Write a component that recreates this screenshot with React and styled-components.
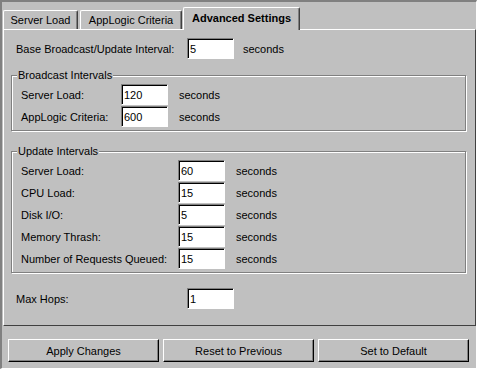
import { createGlobalStyle, styled } from "styled-components";

const GlobalStyle = createGlobalStyle`
  body {
    margin: 0;
    background: #c0c0c0;
    font-family: "Liberation Sans", Arial, sans-serif;
    font-size: 11px;
    color: #000;
  }
`;

const tabs = [
  { name: "Server Load", width: 75, gap: 2 },
  { name: "AppLogic Criteria", width: 102, gap: 1 },
  { name: "Advanced Settings", width: 117, gap: 0, active: true },
];

const broadcast = [
  { label: "Server Load:", value: "120" },
  { label: "AppLogic Criteria:", value: "600" },
];

const updates = [
  { label: "Server Load:", value: "60" },
  { label: "CPU Load:", value: "15" },
  { label: "Disk I/O:", value: "5" },
  { label: "Memory Thrash:", value: "15" },
  { label: "Number of Requests Queued:", value: "15" },
];

const App = () => {
  return (
    <>
      <GlobalStyle />
      <Frame>
        <TabRow>
          {tabs.map((t) => (
            <Tab key={t.name} $w={t.width} $gap={t.gap} $active={t.active}>
              {t.name}
            </Tab>
          ))}
        </TabRow>
        <Panel>
          <FieldRow $label={162}>
            <Label>Base Broadcast/Update Interval:</Label>
            <Field defaultValue="5" readOnly />
            <Label>seconds</Label>
          </FieldRow>

          <Group $top={16}>
            <GroupTitle>Broadcast Intervals</GroupTitle>
            {broadcast.map((r) => (
              <GroupRow key={r.label} $label={89}>
                <Label>{r.label}</Label>
                <Field defaultValue={r.value} readOnly />
                <Label>seconds</Label>
              </GroupRow>
            ))}
          </Group>

          <Group $top={20}>
            <GroupTitle>Update Intervals</GroupTitle>
            {updates.map((r) => (
              <GroupRow key={r.label} $label={146}>
                <Label>{r.label}</Label>
                <Field defaultValue={r.value} readOnly />
                <Label>seconds</Label>
              </GroupRow>
            ))}
          </Group>

          <FieldRow $label={162} $top={15}>
            <Label>Max Hops:</Label>
            <Field defaultValue="1" readOnly />
          </FieldRow>
        </Panel>
        <ButtonBar>
          <Button>Apply Changes</Button>
          <Button>Reset to Previous</Button>
          <Button>Set to Default</Button>
        </ButtonBar>
      </Frame>
    </>
  );
};

const Frame = styled.div`
  width: 477px;
  height: 369px;
  box-sizing: border-box;
  border-top: 2px solid #808080;
  border-left: 2px solid #808080;
  border-right: 1px solid #fff;
  border-bottom: 1px solid #fff;
  padding: 5px 0 0 1px;
  display: flex;
  flex-direction: column;
`;

const TabRow = styled.div`
  display: flex;
  align-items: flex-end;
  height: 22px;
  position: relative;
  z-index: 1;
`;

const Tab = styled.div`
  box-sizing: border-box;
  width: ${(p) => p.$w}px;
  height: ${(p) => (p.$active ? 23 : 19)}px;
  margin-right: ${(p) => p.$gap}px;
  margin-bottom: ${(p) => (p.$active ? -1 : 0)}px;
  background: #c0c0c0;
  border-top: 1px solid #fff;
  border-left: 1px solid #fff;
  border-right: 1px solid #404040;
  border-radius: 2px 2px 0 0;
  box-shadow: inset -1px 0 0 #808080;
  display: flex;
  align-items: center;
  justify-content: center;
  padding-bottom: ${(p) => (p.$active ? 2 : 0)}px;
  font-weight: ${(p) => (p.$active ? "bold" : "normal")};
  white-space: nowrap;
`;

const Panel = styled.div`
  box-sizing: border-box;
  height: 297px;
  border-top: 1px solid #fff;
  border-left: 1px solid #fff;
  border-right: 1px solid #404040;
  border-bottom: 1px solid #404040;
  padding: 8px 9px 0 7px;
  display: flex;
  flex-direction: column;
`;

const Label = styled.span`
  white-space: nowrap;
`;

const FieldRow = styled.div`
  display: grid;
  grid-template-columns: ${(p) => p.$label}px 47px auto;
  column-gap: 9px;
  align-items: center;
  height: 21px;
  padding-left: 5px;
  margin-top: ${(p) => p.$top || 0}px;
`;

const Group = styled.div`
  position: relative;
  margin-top: ${(p) => p.$top}px;
  border: 1px solid #808080;
  box-shadow: 1px 1px 0 #fff, inset 1px 1px 0 #fff;
  padding: 8px 0 3px 9px;
  display: flex;
  flex-direction: column;
  gap: 1px;
`;

const GroupTitle = styled.span`
  position: absolute;
  top: -7px;
  left: 5px;
  padding: 0 1px;
  background: #c0c0c0;
  line-height: 13px;
`;

const GroupRow = styled.div`
  display: grid;
  grid-template-columns: ${(p) => p.$label}px 47px auto;
  column-gap: 11px;
  align-items: center;
  height: 21px;
`;

const Field = styled.input`
  box-sizing: border-box;
  width: 47px;
  height: 21px;
  margin: 0;
  padding: 0 0 0 2px;
  border-top: 1px solid #808080;
  border-left: 1px solid #808080;
  border-right: 1px solid #fff;
  border-bottom: 1px solid #fff;
  box-shadow: inset 1px 1px 0 #000;
  background: #fff;
  font: inherit;
  color: #000;
  outline: none;
`;

const ButtonBar = styled.div`
  display: flex;
  gap: 4px;
  padding: 13px 0 0 5px;
`;

const Button = styled.button`
  box-sizing: border-box;
  width: 151px;
  height: 23px;
  margin: 0;
  padding: 0;
  background: #c0c0c0;
  border-top: 1px solid #fff;
  border-left: 1px solid #fff;
  border-right: 1px solid #000;
  border-bottom: 1px solid #000;
  box-shadow: inset -1px -1px 0 #808080;
  font: inherit;
  color: #000;
`;

export default App;
